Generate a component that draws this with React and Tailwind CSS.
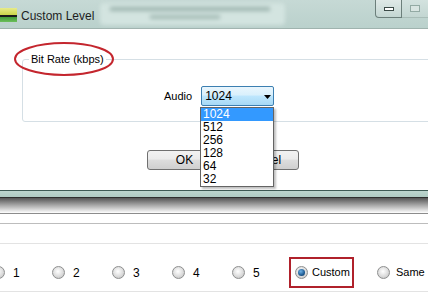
import React from 'react';

const FONT = { fontFamily: '"Liberation Sans", Arial, sans-serif' };

const Radio = ({ checked }) => (
  <span className="relative flex h-[13px] w-[13px] shrink-0 items-center justify-center rounded-full border border-[#8e8f8f] bg-[radial-gradient(circle_at_45%_40%,#ffffff,#dcdcdc_55%,#b9b9b9)]">
    {checked && (
      <span className="h-[7px] w-[7px] rounded-full bg-[radial-gradient(circle_at_40%_35%,#6fb2e6,#1d5a92_60%,#0d2f52)]" />
    )}
  </span>
);

const WinButton = ({ children, className }) => (
  <button className={`h-[20px] rounded-[3px] border border-[#707070] bg-[linear-gradient(to_bottom,#f2f2f2_0%,#ebebeb_45%,#dddddd_50%,#cfcfcf_100%)] text-[12px] text-black ${className}`}>
    {children}
  </button>
);

export default function App() {
  const options = ['1024', '512', '256', '128', '64', '32'];

  return (
    <div className="relative h-[295px] w-[428px] overflow-hidden bg-white text-black" style={FONT}>
      {/* title bar */}
      <div className="flex h-[29px] items-start border-b border-[#9fb3ae] bg-[linear-gradient(to_bottom,#c6d9d5,#bad1cc)]">
        <div className="mt-[8px] flex w-[17px] flex-col">
          <div className="h-[7px] bg-[linear-gradient(to_bottom,#e8eb8a,#c9d64a)]" />
          <div className="h-[2px] bg-[#1b1b1b]" />
          <div className="h-[5px] bg-[linear-gradient(to_bottom,#3f9b3a,#6cbf5a)]" />
        </div>
        <span className="ml-[4px] mt-[7px] text-[12px] text-[#1e1e1e]">Custom Level</span>
        <div className="ml-[6px] mt-[3px] flex h-[22px] w-[185px] flex-col gap-[4px] rounded bg-[#d3e4e0] px-[10px] py-[4px] blur-[2px]">
          <div className="h-[4px] w-[160px] bg-[#9bb3ad]" />
          <div className="ml-[40px] h-[4px] w-[70px] bg-[#a3bab4]" />
        </div>
        <div className="ml-auto flex">
          <div className="flex h-[18px] w-[27px] items-center justify-center rounded-bl-[4px] border border-t-0 border-[#6c7f7b] bg-[linear-gradient(to_bottom,#dfe9e7,#c3d6d2)]">
            <div className="h-[4px] w-[10px] border border-[#3b4a47] bg-white" />
          </div>
          <div className="flex h-[18px] w-[26px] items-start justify-center border-b border-[#a9bdb8] bg-[linear-gradient(to_bottom,#d3e2df,#c3d6d2)] pt-[5px]">
            <div className="h-[7px] w-[10px] border border-[#93aaa4] bg-[#d9e5e2]" />
          </div>
        </div>
      </div>

      {/* dialog body */}
      <div className="h-[161px] pt-[23px]">
        <fieldset className="ml-[22px] mr-[-12px] h-[70px] rounded-[3px] border border-[#d5dfe5] px-0">
          <legend className="ml-[6px] px-[2px] text-[11px] leading-[14px]">Bit Rate (kbps)</legend>
          <div className="ml-[141px] mt-[20px] flex items-center">
            <span className="text-[11px]">Audio</span>
            <div className="ml-[9px] flex h-[20px] w-[73px] items-center justify-between rounded-[2px] border border-[#3c7fb1] bg-[linear-gradient(to_bottom,#eaf6fd_0%,#d9f0fc_45%,#bee6fd_50%,#a7d9f5_100%)] pl-[3px] pr-[2px]">
              <span className="text-[12px] leading-none">1024</span>
              <svg width="7" height="4" viewBox="0 0 7 4" className="mt-[1px]">
                <path d="M0 0h7L3.5 4z" fill="#000" />
              </svg>
            </div>
          </div>
        </fieldset>
        <div className="ml-[147px] mt-[28px] flex gap-[4px]">
          <WinButton className="w-[75px]">OK</WinButton>
          <WinButton className="w-[73px]">Cancel</WinButton>
        </div>
      </div>

      {/* parent window strip */}
      <div className="h-[1px] bg-[#3d5a54]" />
      <div className="h-[6px] bg-[linear-gradient(to_bottom,#bcd5ce,#aecac2)]" />
      <div className="h-[1px] bg-[#2e2e2e]" />
      <div className="h-[15px] bg-[linear-gradient(to_bottom,#555555,#9a9a9a_40%,#ffffff)]" />
      <div className="h-[1px] bg-[#8c8c8c]" />
      <div className="h-[9px]" />
      <div className="h-[1px] bg-[#bdbdbd]" />
      <div className="h-[19px]" />
      <div className="h-[1px] bg-[#e3e3e3]" />
      <div className="flex h-[47px] items-start pt-[13px] text-[12px]">
        {['1', '2', '3', '4'].map((n) => (
          <div key={n} className="flex h-[31px] w-[60px] shrink-0 items-center gap-[8px] first:ml-[-8px]">
            <Radio />
            <span>{n}</span>
          </div>
        ))}
        <div className="flex h-[31px] w-[57px] shrink-0 items-center gap-[8px]">
          <Radio />
          <span>5</span>
        </div>
        <div className="flex h-[31px] w-[65px] shrink-0 items-center gap-[4px] border-2 border-[#b0212b] pl-[4px] text-[11px]">
          <Radio checked />
          <span>Custom</span>
        </div>
        <div className="ml-[23px] flex h-[31px] items-center gap-[6px] text-[11px]">
          <Radio />
          <span>Same</span>
        </div>
      </div>
      <div className="h-[1px] bg-[#e3e3e3]" />

      {/* open dropdown list */}
      <div className="absolute left-[200px] top-[107px] w-[74px] border border-[#646464] bg-white shadow-[2px_2px_2px_rgba(0,0,0,0.25)]">
        {options.map((o, i) => (
          <div
            key={o}
            className={`h-[13px] pl-[2px] text-[12px] leading-[13px] ${i === 0 ? 'bg-[#3399ff] text-white' : 'text-black'}`}
          >
            {o}
          </div>
        ))}
      </div>

      {/* annotation ellipse */}
      <svg className="pointer-events-none absolute left-[12px] top-[40px]" width="104" height="40" viewBox="0 0 104 40">
        <ellipse cx="52" cy="19" rx="49" ry="16" fill="none" stroke="#c4262e" strokeWidth="2" />
      </svg>
    </div>
  );
}
